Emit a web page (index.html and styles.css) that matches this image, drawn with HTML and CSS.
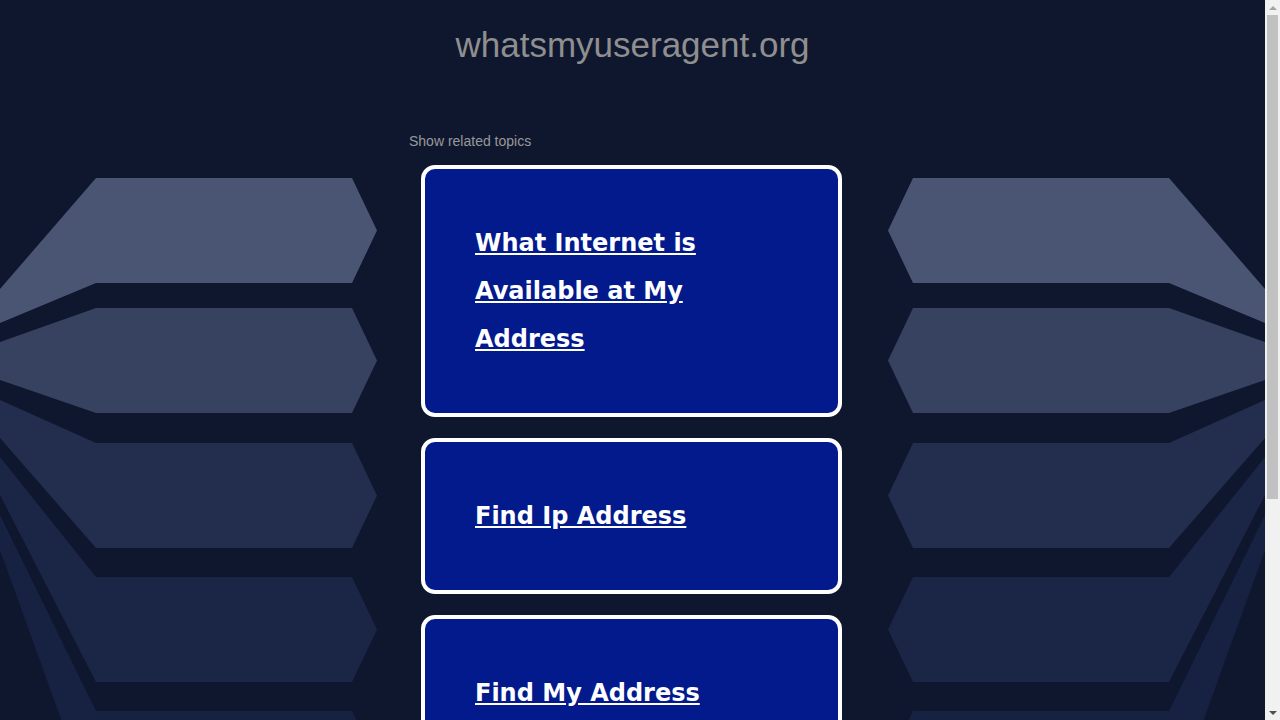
FILE: index.html
```html
<!DOCTYPE html>
<html lang="en">
<head>
<meta charset="utf-8">
<title>whatsmyuseragent.org</title>
<link rel="stylesheet" href="styles.css">
</head>
<body>
<div class="backdrop" aria-hidden="true">
  <svg class="wing" width="400" height="830" viewBox="0 0 400 830">
    <polygon fill="#4a5574" points="0,289 96,178 352,178 377,230.5 352,283 96,283 0,323"/>
    <polygon fill="#364260" points="0,342 96,308 352,308 377,360.5 352,413 96,413 0,380"/>
    <polygon fill="#232e4e" points="0,400 96,443 352,443 377,495.5 352,548 96,548 0,438"/>
    <polygon fill="#1b2546" points="0,457 96,577 352,577 377,629.5 352,682 96,682 0,495"/>
    <polygon fill="#172242" points="0,515 96,711 352,711 377,763.5 352,816 96,816 0,550"/>
  </svg>
  <svg class="wing wing-right" width="400" height="830" viewBox="0 0 400 830">
    <polygon fill="#4a5574" points="0,289 96,178 352,178 377,230.5 352,283 96,283 0,323"/>
    <polygon fill="#364260" points="0,342 96,308 352,308 377,360.5 352,413 96,413 0,380"/>
    <polygon fill="#232e4e" points="0,400 96,443 352,443 377,495.5 352,548 96,548 0,438"/>
    <polygon fill="#1b2546" points="0,457 96,577 352,577 377,629.5 352,682 96,682 0,495"/>
    <polygon fill="#172242" points="0,515 96,711 352,711 377,763.5 352,816 96,816 0,550"/>
  </svg>
</div>

<div class="page">
  <h1 class="domain">whatsmyuseragent.org</h1>
  <main class="topics">
    <p class="topics-label">Show related topics</p>
    <div class="card"><a class="card-link" href="#">What Internet is Available at My Address</a></div>
    <div class="card"><a class="card-link" href="#">Find Ip Address</a></div>
    <div class="card"><a class="card-link" href="#">Find My Address</a></div>
    <div class="card"><a class="card-link" href="#">Ip Address Lookup</a></div>
  </main>
</div>

<div class="scrollbar" aria-hidden="true">
  <div class="sb-button"><span class="sb-arrow-up"></span></div>
  <div class="sb-track"><div class="sb-thumb"></div></div>
  <div class="sb-button"><span class="sb-arrow-down"></span></div>
</div>
</body>
</html>
```

FILE: styles.css
```css
html, body {
  margin: 0;
  padding: 0;
}

html {
  background: #0f172f;
}

body {
  position: relative;
  margin-right: 15px;
  background: #0f172f;
  font-family: "Liberation Sans", Arial, sans-serif;
}

.backdrop {
  position: absolute;
  top: 0;
  left: 0;
  right: 0;
  height: 830px;
  overflow: hidden;
  display: flex;
  justify-content: space-between;
  pointer-events: none;
  z-index: 0;
}

.wing {
  display: block;
  flex: none;
}

.wing-right {
  transform: scaleX(-1);
}

.page {
  position: relative;
  z-index: 1;
}

.domain {
  margin: 0;
  padding-top: 25px;
  font-size: 35px;
  font-weight: normal;
  line-height: 40px;
  text-align: center;
  color: #8f8f8f;
}

.topics {
  width: 447px;
  margin: 0 auto;
  padding: 68px 0 34px;
}

.topics-label {
  margin: 0 0 16px;
  font-size: 14px;
  line-height: 16px;
  color: #999999;
}

.card {
  margin: 0 14px 21px 12px;
  padding: 50px;
  border: 4px solid #ffffff;
  border-radius: 14px;
  background: #021a8b;
}

.card-link {
  font-family: "DejaVu Sans", Verdana, sans-serif;
  font-weight: bold;
  font-size: 24px;
  line-height: 48px;
  color: #ffffff;
  text-decoration: underline;
}

/* browser-style vertical scrollbar */
.scrollbar {
  position: fixed;
  top: 0;
  right: 0;
  width: 15px;
  height: 100vh;
  background: #f1f1f1;
  display: flex;
  flex-direction: column;
  z-index: 2;
}

.sb-button {
  height: 15px;
  flex: none;
  display: flex;
  align-items: center;
  justify-content: center;
}

.sb-arrow-up {
  width: 0;
  height: 0;
  border-left: 4px solid transparent;
  border-right: 4px solid transparent;
  border-bottom: 4px solid #a3a3a3;
}

.sb-arrow-down {
  width: 0;
  height: 0;
  border-left: 4px solid transparent;
  border-right: 4px solid transparent;
  border-top: 4px solid #505050;
}

.sb-track {
  flex: 1;
  padding: 0 2px;
}

.sb-thumb {
  height: 484px;
  background: #c1c1c1;
}
```
